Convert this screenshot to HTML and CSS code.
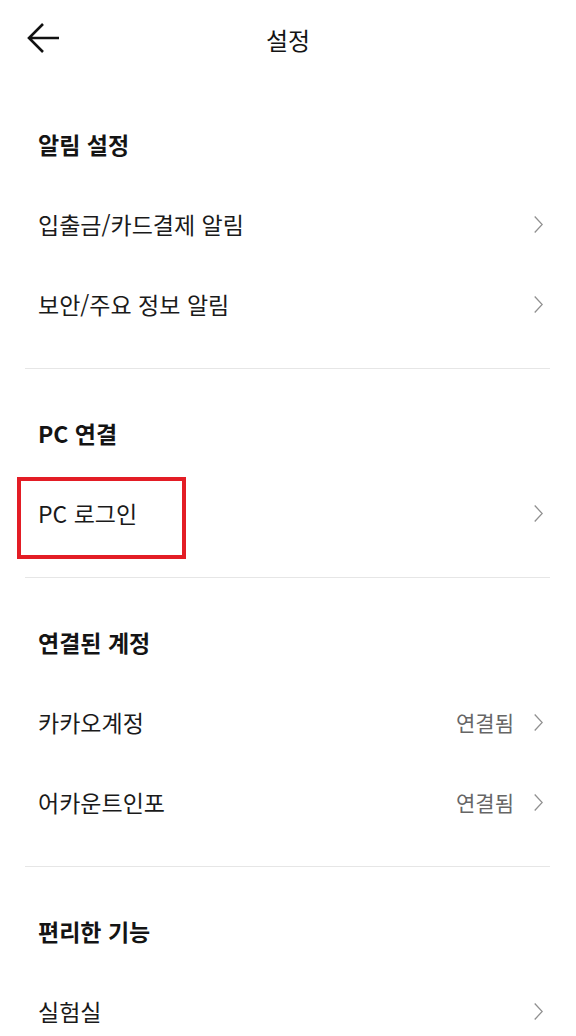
FILE: index.html
```html
<!DOCTYPE html>
<html lang="ko">
<head>
<meta charset="utf-8">
<title>설정</title>
<link rel="stylesheet" href="styles.css">
</head>
<body>
<header class="topbar">
  <div class="back">
    <svg width="34" height="30" viewBox="0 0 34 30" aria-hidden="true">
      <path d="M33 15H3M17 1L3 15L17 29" fill="none" stroke="#111" stroke-width="2.6" stroke-linecap="butt" stroke-linejoin="miter"/>
    </svg>
  </div>
  <h1 class="title">설정</h1>
  <div></div>
</header>

<section class="section">
  <h2 class="sec-title">알림 설정</h2>
  <div class="row"><span class="label">입출금/카드결제 알림</span><span class="chev"></span></div>
  <div class="row"><span class="label">보안/주요 정보 알림</span><span class="chev"></span></div>
</section>

<section class="section">
  <h2 class="sec-title">PC 연결</h2>
  <div class="row highlighted"><span class="label">PC 로그인</span><span class="chev"></span><span class="redbox"></span></div>
</section>

<section class="section">
  <h2 class="sec-title">연결된 계정</h2>
  <div class="row"><span class="label">카카오계정</span><span class="status">연결됨</span><span class="chev"></span></div>
  <div class="row"><span class="label">어카운트인포</span><span class="status">연결됨</span><span class="chev"></span></div>
</section>

<section class="section last">
  <h2 class="sec-title">편리한 기능</h2>
  <div class="row"><span class="label">실험실</span><span class="chev"></span></div>
</section>
</body>
</html>
```

FILE: styles.css
```css
html, body {
  margin: 0;
  padding: 0;
  background: #ffffff;
}
body {
  width: 576px;
  height: 1036px;
  overflow: hidden;
  font-family: "Noto Sans CJK KR", "Noto Sans", sans-serif;
  color: #141414;
}
.topbar {
  height: 80px;
  display: grid;
  grid-template-columns: 1fr auto 1fr;
  align-items: center;
}
.back {
  padding-left: 26px;
  display: flex;
  align-items: center;
  margin-top: -4px;
}
.back svg { display: block; }
.title {
  margin: 0;
  font-size: 24px;
  font-weight: 400;
  color: #141414;
  line-height: 1;
}
.section {
  margin: 0 26px 0 25px;
  padding: 24px 0;
  border-bottom: 1px solid #e6e6e6;
}
.section.last { border-bottom: none; }
.sec-title {
  margin: 0;
  height: 80px;
  display: flex;
  align-items: center;
  padding-left: 13px;
  font-size: 23px;
  font-weight: 700;
  color: #141414;
}
.row {
  position: relative;
  height: 80px;
  display: flex;
  align-items: center;
  padding: 0 7px 0 13px;
}
.label {
  flex: 1;
  font-size: 23px;
  font-weight: 400;
  color: #1a1a1a;
}
.status {
  font-size: 21px;
  color: #666666;
  margin-right: 20px;
}
.chev {
  width: 9px;
  height: 17px;
  background: no-repeat center / 9px 17px url("data:image/svg+xml;utf8,<svg xmlns='http://www.w3.org/2000/svg' width='9' height='17' viewBox='0 0 9 17'><path d='M0.7 0.5L8.2 8.5L0.7 16.5' fill='none' stroke='%23909090' stroke-width='1.3'/></svg>");
}
.redbox {
  position: absolute;
  left: -8px;
  top: 4px;
  width: 169px;
  height: 82px;
  box-sizing: border-box;
  border: 4.5px solid #e31d25;
  pointer-events: none;
}
```
